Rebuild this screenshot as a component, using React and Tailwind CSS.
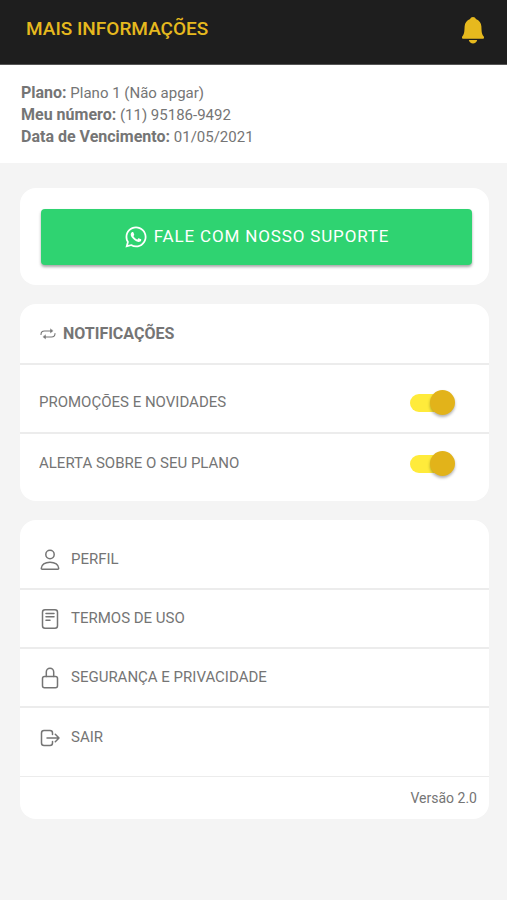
import { useState } from "react";
import { FaWhatsapp } from "react-icons/fa";

const BellIcon = () => (
  <svg viewBox="0 0 22 27" fill="currentColor" className="h-[27px] w-[22px]" aria-hidden="true">
    <path d="M11 0c1.4 0 2.5.8 2.9 2 3.5 1.3 5.3 4 5.500 7.500.2 5 .3 7.600 2.200 9.800.8 1.200.4 2.400-.9 2.400H1.300c-1.300 0-1.700-1.200-.9-2.400 1.900-2.200 2-4.800 2.200-9.800C2.800 6 4.600 3.300 8.100 2 8.500.8 9.600 0 11 0z" />
    <path d="M6.800 23h8.400c-.5 2.200-2.200 3.400-4.200 3.400S7.300 25.200 6.800 23z" />
  </svg>
);

const LineIcon = ({ children }) => (
  <svg
    viewBox="0 0 20 22"
    fill="none"
    stroke="currentColor"
    strokeWidth="1.5"
    strokeLinecap="round"
    strokeLinejoin="round"
    className="h-[22px] w-5 shrink-0"
    aria-hidden="true"
  >
    {children}
  </svg>
);

const RepeatIcon = () => (
  <svg
    viewBox="0 0 16 12"
    fill="none"
    stroke="currentColor"
    strokeWidth="1.1"
    strokeLinecap="round"
    className="h-3 w-4 shrink-0"
    aria-hidden="true"
  >
    <path d="M1 6.5C1 4 2 3 4.5 3h7M15 5.5C15 8 14 9 11.5 9h-7" />
    <path d="M10.5 1.2v3.6L12.8 3zM5.5 7.2v3.6L3.2 9z" fill="currentColor" strokeWidth="0.5" />
  </svg>
);

const menuItems = [
  {
    label: "PERFIL",
    href: "#perfil",
    icon: (
      <>
        <circle cx="10" cy="5.5" r="4.2" />
        <path d="M1.3 19.3c0-3.6 3.7-6.1 8.7-6.1s8.7 2.5 8.7 6.1c0 .6-.3.9-.9.9H2.2c-.6 0-.9-.3-.9-.9z" />
      </>
    ),
  },
  {
    label: "TERMOS DE USO",
    href: "#termos",
    icon: (
      <>
        <rect x="2.5" y="1.7" width="15" height="18.6" rx="2.5" />
        <path d="M6 5.5h8M6 8.8h8M6 12.2h4" />
      </>
    ),
  },
  {
    label: "SEGURANÇA E PRIVACIDADE",
    href: "#seguranca",
    icon: (
      <>
        <rect x="2.5" y="9.5" width="15" height="11.2" rx="2" />
        <path d="M6.3 9.5V5a3.700 3.700 0 0 1 7.400 0v4.500" />
      </>
    ),
  },
  {
    label: "SAIR",
    href: "#sair",
    icon: (
      <>
        <path d="M12.5 7.5V6c0-1.5-1-2.5-2.5-2.5H4C2.5 3.5 1.5 4.5 1.5 6v10c0 1.5 1 2.5 2.5 2.5h6c1.5 0 2.5-1 2.5-2.5v-1.5" />
        <path d="M7 11h12M15.3 7.3L19 11l-3.7 3.7" />
      </>
    ),
  },
];

const ToggleRow = ({ label, checked, onChange }) => (
  <label className="flex h-[59px] cursor-pointer items-center justify-between pl-[19px] pr-[34px]">
    <span>{label}</span>
    <span className="relative flex h-[26px] w-[45px] items-center">
      <input
        type="checkbox"
        role="switch"
        checked={checked}
        onChange={onChange}
        className="peer sr-only"
      />
      <span className="h-[18px] w-10 rounded-full bg-gray-300 peer-checked:bg-[#ffeb3b]" />
      <span className="absolute left-0 size-[25px] rounded-full bg-gray-100 shadow-[0_2px_3px_rgba(0,0,0,0.3)] peer-checked:left-5 peer-checked:bg-[#e2b31a]" />
    </span>
  </label>
);

const App = () => {
  const [promos, setPromos] = useState(true);
  const [planAlerts, setPlanAlerts] = useState(true);

  return (
    <div className="min-h-screen bg-[#f4f4f4] font-[Roboto,sans-serif] text-[15px] text-[#757575]">
      {/* Top bar */}
      <header className="flex h-[65px] items-start justify-between border-b border-[#555] bg-[#1e1e1e] pl-[26px] pr-[23px] pt-[17px] text-[#e6b91e]">
        <h1 className="text-[19px] leading-6 font-medium">MAIS INFORMAÇÕES</h1>
        <button type="button" aria-label="Alertas" className="cursor-pointer">
          <BellIcon />
        </button>
      </header>

      {/* Plan summary */}
      <section className="bg-white px-[21px] pt-[17px] pb-[15px] leading-[22px]">
        <p>
          <strong className="text-base leading-none">Plano:</strong> Plano 1 (Não apgar)
        </p>
        <p>
          <strong className="text-base leading-none">Meu número:</strong> (11) 95186-9492
        </p>
        <p>
          <strong className="text-base leading-none">Data de Vencimento:</strong> 01/05/2021
        </p>
      </section>

      <main className="flex flex-col gap-[19px] pl-5 pr-[18px] pt-[25px] pb-20">
        <section className="rounded-2xl bg-white pt-[21px] pb-5 pl-[21px] pr-[17px]">
          <button
            type="button"
            className="flex h-14 w-full cursor-pointer items-center justify-center gap-1.5 rounded bg-[#2fd371] text-[17px] tracking-wider text-white shadow-[0_2px_3px_rgba(0,0,0,0.35)]"
          >
            <FaWhatsapp className="size-6" aria-hidden="true" />
            FALE COM NOSSO SUPORTE
          </button>
        </section>

        {/* Notifications */}
        <section className="rounded-2xl bg-white">
          <h2 className="flex h-[61px] items-center gap-[7px] border-b-2 border-[#ececec] pl-5 text-base font-bold">
            <RepeatIcon />
            NOTIFICAÇÕES
          </h2>
          <div className="border-b-2 border-[#ececec] pt-2">
            <ToggleRow
              label="PROMOÇÕES E NOVIDADES"
              checked={promos}
              onChange={() => setPromos(!promos)}
            />
          </div>
          <div className="pb-2">
            <ToggleRow
              label="ALERTA SOBRE O SEU PLANO"
              checked={planAlerts}
              onChange={() => setPlanAlerts(!planAlerts)}
            />
          </div>
        </section>

        {/* Menu */}
        <section className="rounded-2xl bg-white pt-[11px]">
          <nav className="pb-[9px]">
            {menuItems.map((item) => (
              <a
                key={item.label}
                href={item.href}
                className="flex h-[59px] items-center gap-[11px] border-b-2 border-[#ececec] pl-5 last:border-0"
              >
                <LineIcon>{item.icon}</LineIcon>
                {item.label}
              </a>
            ))}
          </nav>
          <p className="border-t border-[#ececec] py-[11px] pr-3 text-right text-sm leading-5">
            Versão 2.0
          </p>
        </section>
      </main>
    </div>
  );
};

export default App;
